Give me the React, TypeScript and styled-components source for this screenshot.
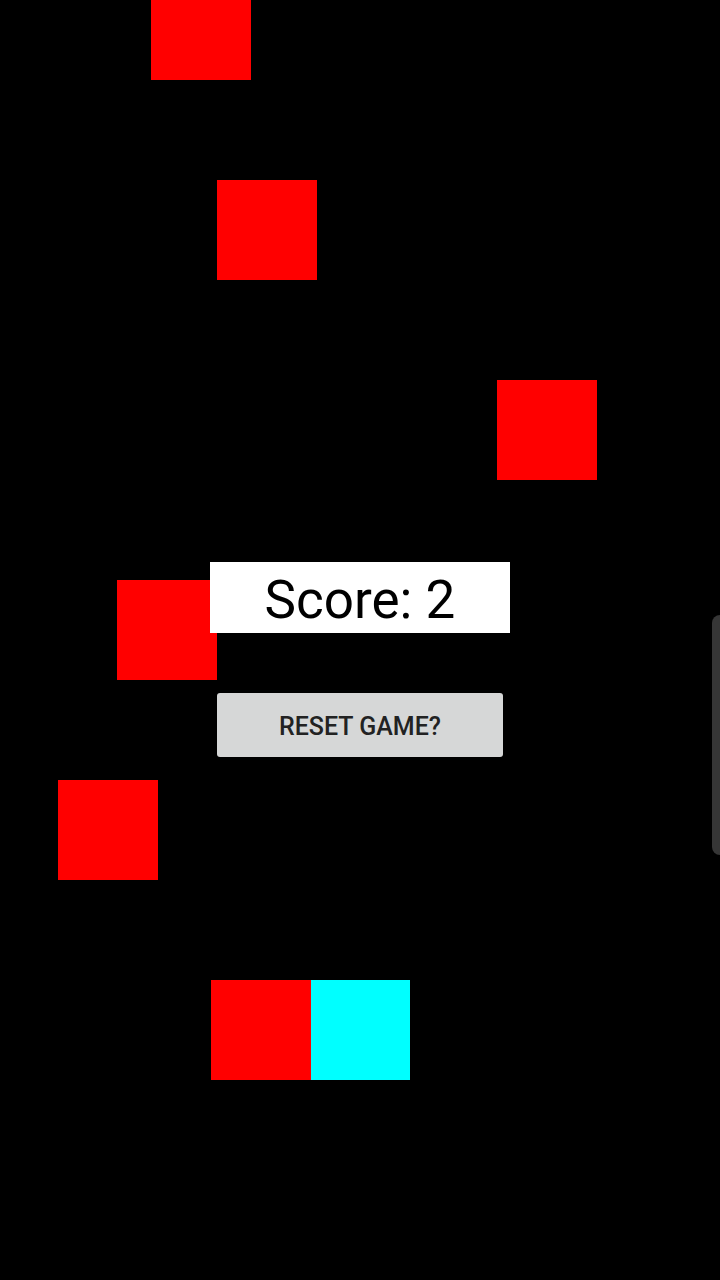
import React from "react";
import styled, { createGlobalStyle } from "styled-components";

const Global = createGlobalStyle`
  html, body { margin: 0; padding: 0; background: #000; }
  body { font-family: Roboto, "Noto Sans", sans-serif; }
`;

const Board = styled.main`
  position: relative;
  width: 720px;
  height: 1280px;
  overflow: hidden;
  background: #000;
`;

const Block = styled.div<{ $color: string; $w?: number }>`
  position: absolute;
  width: ${(p) => p.$w ?? 100}px;
  height: 100px;
  background: ${(p) => p.$color};
`;

const ScoreBox = styled.div`
  position: absolute;
  left: 210px;
  top: 562px;
  width: 300px;
  height: 71px;
  box-sizing: border-box;
  padding-top: 5px;
  background: #fff;
  display: flex;
  align-items: center;
  justify-content: center;
  font-family: Roboto, sans-serif;
  font-size: 53px;
  color: #000;
  line-height: 1;
`;

const ResetButton = styled.button`
  position: absolute;
  left: 217px;
  top: 693px;
  width: 286px;
  height: 64px;
  box-sizing: border-box;
  border: none;
  border-radius: 3px;
  background: #d6d7d7;
  color: #222;
  font-family: Roboto, sans-serif;
  font-weight: 500;
  font-size: 25px;
  padding: 2px 0 0;
  display: flex;
  align-items: center;
  justify-content: center;
`;

const EdgeHandle = styled.div`
  position: absolute;
  left: 712px;
  top: 615px;
  width: 12px;
  height: 240px;
  background: #363636;
  border-radius: 8px 0 0 8px;
`;

const blocks = [
  { x: 151, y: -20, c: "#ff0000" },
  { x: 217, y: 180, c: "#ff0000" },
  { x: 497, y: 380, c: "#ff0000" },
  { x: 117, y: 580, c: "#ff0000" },
  { x: 58, y: 780, c: "#ff0000" },
  { x: 211, y: 980, c: "#ff0000" },
  { x: 311, y: 980, c: "#00ffff", w: 99 },
];

export default function App() {
  return (
    <>
      <Global />
      <Board>
        {blocks.map((b, i) => (
          <Block key={i} $color={b.c} $w={b.w} style={{ left: b.x, top: b.y }} />
        ))}
        <ScoreBox>Score: 2</ScoreBox>
        <ResetButton>RESET GAME?</ResetButton>
        <EdgeHandle />
      </Board>
    </>
  );
}
